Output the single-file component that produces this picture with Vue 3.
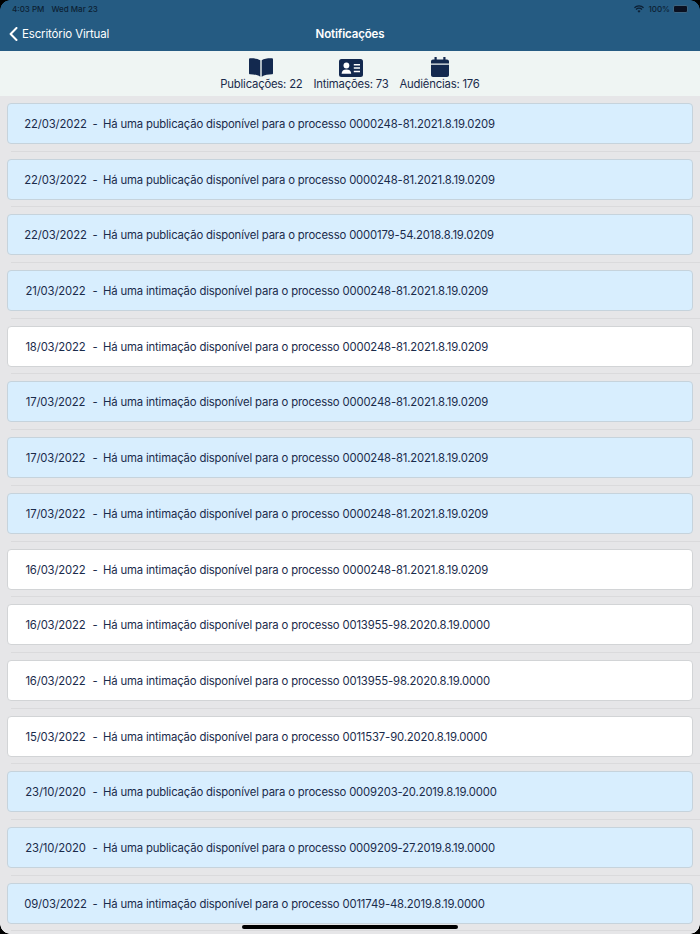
<script setup>
const rows = [
  ['22/03/2022', 'publicação', '0000248-81.2021.8.19.0209', true],
  ['22/03/2022', 'publicação', '0000248-81.2021.8.19.0209', true],
  ['22/03/2022', 'publicação', '0000179-54.2018.8.19.0209', true],
  ['21/03/2022', 'intimação', '0000248-81.2021.8.19.0209', true],
  ['18/03/2022', 'intimação', '0000248-81.2021.8.19.0209', false],
  ['17/03/2022', 'intimação', '0000248-81.2021.8.19.0209', true],
  ['17/03/2022', 'intimação', '0000248-81.2021.8.19.0209', true],
  ['17/03/2022', 'intimação', '0000248-81.2021.8.19.0209', true],
  ['16/03/2022', 'intimação', '0000248-81.2021.8.19.0209', false],
  ['16/03/2022', 'intimação', '0013955-98.2020.8.19.0000', false],
  ['16/03/2022', 'intimação', '0013955-98.2020.8.19.0000', false],
  ['15/03/2022', 'intimação', '0011537-90.2020.8.19.0000', false],
  ['23/10/2020', 'publicação', '0009203-20.2019.8.19.0000', true],
  ['23/10/2020', 'publicação', '0009209-27.2019.8.19.0000', true],
  ['09/03/2022', 'intimação', '0011749-48.2019.8.19.0000', true],
]
</script>

<template>
  <div class="screen">
    <header class="nav">
      <div class="status">
        <span class="clock">4:03 PM</span>
        <span class="clock">Wed Mar 23</span>
        <span class="spacer"></span>
        <svg class="wifi" width="10" height="8" viewBox="0 0 16 12"><path d="M8 12 5.600 9.200a3.400 3.400 0 0 1 4.800 0ZM3.900 7.400 2.500 5.800a8 8 0 0 1 11 0l-1.400 1.600a6 6 0 0 0-8.200 0ZM1.400 4.600 0 3a11.700 11.700 0 0 1 16 0l-1.400 1.600a9.700 9.700 0 0 0-13.200 0Z" fill="#0c1f33"/></svg>
        <span class="clock">100%</span>
        <span class="battery"></span>
      </div>
      <div class="bar">
        <div class="back">
          <svg width="9" height="14" viewBox="0 0 9 14"><path d="M7.500 1 1.600 7l5.900 6" fill="none" stroke="#fff" stroke-width="2" stroke-linecap="round" stroke-linejoin="round"/></svg>
          <span>Escritório Virtual</span>
        </div>
        <div class="title">Notificações</div>
      </div>
    </header>
    <section class="summary">
      <div class="stat">
        <div class="ico"><svg width="24" height="19" viewBox="0 0 24 19"><path d="M11.300 2.200C9 .8 5.400.2 1.200.3.500.3 0 .8 0 1.400v13.800c0 .6.500 1 1.100 1.100 3.400.1 7.400.6 10.200 2.400ZM12.700 2.200C15 .8 18.600.2 22.800.3c.7 0 1.200.5 1.200 1.100v13.800c0 .6-.5 1-1.100 1.100-3.400.1-7.400.6-10.200 2.400Z" fill="#13294f"/></svg></div>
        <span>Publicações: 22</span>
      </div>
      <div class="stat">
        <div class="ico"><svg width="24" height="18" viewBox="0 0 24 18"><rect width="24" height="18" rx="2.500" fill="#13294f"/><circle cx="7.400" cy="6.500" r="2.900" fill="#fff"/><path d="M2.600 14.800c0-2.700 1.800-4.200 4.800-4.200s4.800 1.500 4.800 4.200Z" fill="#fff"/><path d="M14.800 5.800h6.200M14.800 9.100h6.200M14.800 12.400h6.200" stroke="#fff" stroke-width="1.500"/></svg></div>
        <span>Intimações: 73</span>
      </div>
      <div class="stat">
        <div class="ico"><svg width="18" height="20" viewBox="0 0 18 20"><path d="M3.500 0h2.200v2.500h6.600V0h2.200v2.500H16c1.100 0 2 .9 2 2V6.500H0v-2c0-1.100.9-2 2-2h1.500ZM0 7.800h18V18c0 1.100-.9 2-2 2H2c-1.100 0-2-.9-2-2Z" fill="#13294f"/></svg></div>
        <span>Audiências: 176</span>
      </div>
    </section>
    <ul class="list">
      <li v-for="(r, i) in rows" :key="i" class="row">
        <div class="card" :class="{ unread: r[3] }">
          <span class="date">{{ r[0] }}</span>
          <span class="dash">-</span>
          <span>Há uma {{ r[1] }} disponível para o processo {{ r[2] }}</span>
        </div>
      </li>
    </ul>
    <div class="home"></div>
    <i class="corner tl"></i><i class="corner tr"></i><i class="corner bl"></i><i class="corner br"></i>
  </div>
</template>

<style>
html, body { margin: 0; background: #e6e6e8; }
</style>

<style scoped>
.screen { position: relative; width: 700px; height: 934px; overflow: hidden; background: #e6e6e8; font-family: Inter, "Liberation Sans", sans-serif; color: #1a2b4b; }
.nav { height: 51px; background: #255b82; color: #fff; }
.status { height: 17px; display: flex; align-items: center; gap: 7px; padding: 0 12px 0 12px; font-size: 8px; font-weight: 500; color: #0c1f33; }
.status .spacer { flex: 1; }
.status .wifi { margin-right: -3px; }
.battery { width: 13px; height: 6px; background: #0a1020; border-radius: 2px; border: 1px solid #3c6480; margin-left: -4px; }
.bar { display: grid; grid-template-columns: 1fr auto 1fr; align-items: center; height: 33px; padding-left: 9px; padding-right: 9px; font-size: 11.500px; letter-spacing: -0.15px; }
.back { display: flex; align-items: center; gap: 4px; }
.title { font-weight: 600; }
.summary { height: 45px; background: #eff5f3; display: flex; justify-content: center; gap: 11px; padding-top: 5px; box-sizing: border-box; font-size: 11.300px; letter-spacing: -0.2px; }
.stat { display: flex; flex-direction: column; align-items: center; }
.ico { height: 21px; display: flex; align-items: flex-end; justify-content: center; }
.stat span { line-height: 15px; }
.list { list-style: none; margin: 0; padding: 0; }
.row { height: 55.700px; box-sizing: border-box; padding: 7px 7px 0; background: linear-gradient(#dadadc, #dadadc) no-repeat 11px 100% / 100% 1px; }
.card { height: 41px; box-sizing: border-box; padding: 1px 0 0 16px; border: 1px solid #d2d4d6; border-radius: 4px; background: #fff; display: grid; grid-template-columns: 63px 16px 1fr; align-items: center; white-space: nowrap; font-size: 11.300px; letter-spacing: -0.15px; color: #1a2b4b; }
.date { text-align: center; }
.dash { text-align: center; }
.card.unread { background: #d8eefe; border-color: #c6d3dc; }
.home { position: absolute; left: 242px; bottom: 5px; width: 216px; height: 4px; border-radius: 2px; background: #000; }
.corner { position: absolute; width: 10px; height: 10px; background: #000; }
.tl { left: 0; top: 0; mask: radial-gradient(circle at 100% 100%, transparent 9.500px, #000 10px); }
.tr { right: 0; top: 0; mask: radial-gradient(circle at 0 100%, transparent 9.500px, #000 10px); }
.bl { left: 0; bottom: 0; mask: radial-gradient(circle at 100% 0, transparent 9.500px, #000 10px); }
.br { right: 0; bottom: 0; mask: radial-gradient(circle at 0 0, transparent 9.500px, #000 10px); }
</style>
